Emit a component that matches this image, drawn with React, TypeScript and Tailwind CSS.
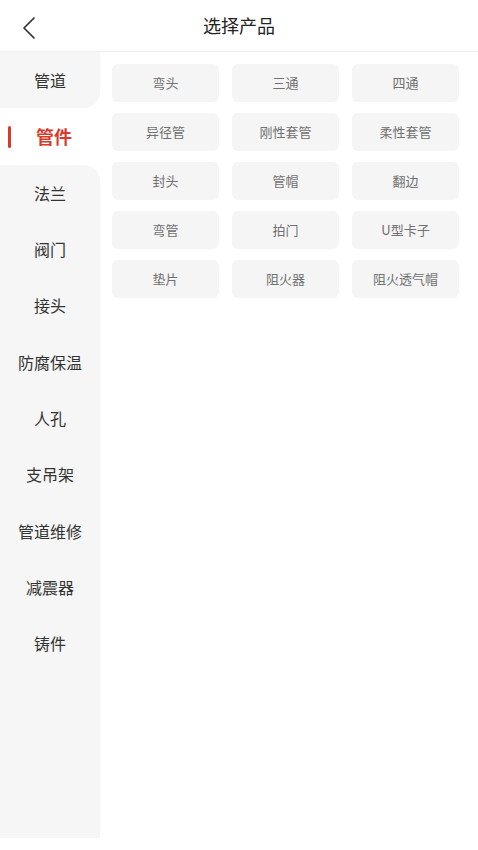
const CATEGORIES = ['管道', '管件', '法兰', '阀门', '接头', '防腐保温', '人孔', '支吊架', '管道维修', '减震器', '铸件'];

const PRODUCTS = [
  '弯头', '三通', '四通',
  '异径管', '刚性套管', '柔性套管',
  '封头', '管帽', '翻边',
  '弯管', '拍门', 'U型卡子',
  '垫片', '阻火器', '阻火透气帽',
];

const ACTIVE = 1;

export default function App() {
  return (
    <div
      className="w-[478px] h-[850px] bg-white flex flex-col overflow-hidden"
      style={{ fontFamily: '"Noto Sans CJK SC", "Noto Sans", sans-serif' }}
    >
      {/* header */}
      <div className="h-[52px] flex items-center relative border-b border-[#f0f0f0] shrink-0">
        <button className="absolute left-[22px] top-[16px] text-[#333]">
          <svg width="14" height="24" viewBox="0 0 14 24" fill="none">
            <path d="M12 2 L2 12 L12 22" stroke="currentColor" strokeWidth="1.7" strokeLinecap="round" strokeLinejoin="round" />
          </svg>
        </button>
        <h1 className="flex-1 text-center text-[18px] text-[#222] font-normal">选择产品</h1>
      </div>

      <div className="flex flex-1">
        {/* sidebar */}
        <div className="w-[100px] h-[786px] bg-[#f6f6f6] flex flex-col">
          {CATEGORIES.map((name, idx) => {
            const active = idx === ACTIVE;
            const before = idx === ACTIVE - 1;
            const after = idx === ACTIVE + 1;
            return (
              <div key={name} className="bg-white">
                <div
                  className={
                    'h-[56.3px] flex items-center justify-center relative ' +
                    (active ? 'bg-white' : 'bg-[#f6f6f6]') +
                    (before ? ' rounded-br-[16px]' : '') +
                    (after ? ' rounded-tr-[16px]' : '')
                  }
                >
                  {active && <span className="absolute left-[8px] top-[18px] w-[3px] h-[22px] bg-[#d93a2b] rounded-sm" />}
                  <span
                    className={
                      active
                        ? 'text-[18px] font-bold text-[#d93a2b] pl-[8px]'
                        : 'text-[16px] text-[#333]'
                    }
                  >
                    {name}
                  </span>
                </div>
              </div>
            );
          })}
          <div className="flex-1 bg-[#f6f6f6]" />
        </div>

        {/* product grid */}
        <div className="flex-1 pl-[12px] pr-[19px] pt-[12px]">
          <div className="grid grid-cols-3 gap-x-[13px] gap-y-[11px]">
            {PRODUCTS.map(p => (
              <div
                key={p}
                className="h-[38px] rounded-[6px] bg-[#f5f5f5] flex items-center justify-center text-[13px] text-[#707070]"
              >
                {p}
              </div>
            ))}
          </div>
        </div>
      </div>
    </div>
  );
}
